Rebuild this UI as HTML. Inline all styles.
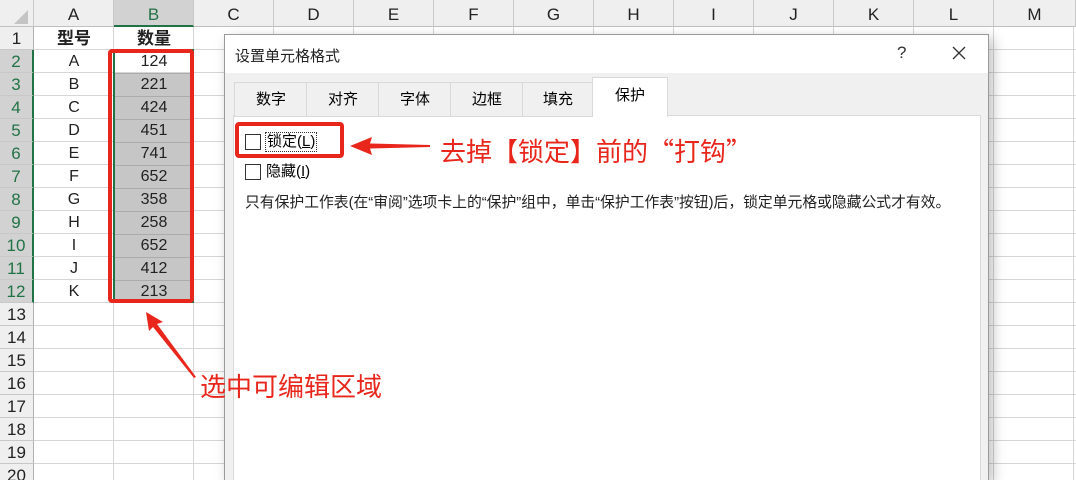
<!DOCTYPE html>
<html style="overflow:hidden;width:1076px;height:480px"><head><meta charset="utf-8"><style>
body{margin:0;width:1076px;height:480px;overflow:hidden;background:#fff;position:relative;font-family:"Liberation Sans","Noto Sans CJK SC",sans-serif;}
.a{position:absolute}
.ch{position:absolute;top:0;height:27px;line-height:30px;text-align:center;font-size:17px;color:#222;border-right:1px solid #c8c8c8;box-sizing:border-box;background:#efefef;border-bottom:1px solid #c0c0c0}
.rh{position:absolute;left:0;width:34px;height:23px;line-height:24px;text-align:center;font-size:17px;color:#222;background:#efefef;border-bottom:1px solid #c8c8c8;border-right:1px solid #b0b0b0;box-sizing:border-box;overflow:hidden}
.c{position:absolute;height:23px;line-height:24px;text-align:center;font-size:16px;color:#222;box-sizing:border-box}
</style></head><body>
<div class="a" style="left:0;top:0;width:1076px;height:480px;background-color:#fff;background-image:linear-gradient(to right,#d6d6d6 1px,transparent 1px),linear-gradient(to bottom,#d6d6d6 1px,transparent 1px);background-size:80px 23px;background-position:33px 26px"></div>
<div class="ch" style="left:0;width:34px"><div class="a" style="left:14px;top:10px;width:0;height:0;border-left:14px solid transparent;border-bottom:14px solid #c4c4c4"></div></div>
<div class="ch" style="left:34px;width:80px">A</div>
<div class="ch" style="left:114px;width:80px;background:#d2d2d2;border-bottom:2px solid #217346;color:#217346">B</div>
<div class="ch" style="left:194px;width:80px">C</div>
<div class="ch" style="left:274px;width:80px">D</div>
<div class="ch" style="left:354px;width:80px">E</div>
<div class="ch" style="left:434px;width:80px">F</div>
<div class="ch" style="left:514px;width:80px">G</div>
<div class="ch" style="left:594px;width:80px">H</div>
<div class="ch" style="left:674px;width:80px">I</div>
<div class="ch" style="left:754px;width:80px">J</div>
<div class="ch" style="left:834px;width:80px">K</div>
<div class="ch" style="left:914px;width:80px">L</div>
<div class="ch" style="left:994px;width:82px">M</div>

<div class="rh" style="top:27px">1</div>
<div class="rh" style="top:50px;background:#d2d2d2;color:#217346;border-right:2px solid #217346">2</div>
<div class="rh" style="top:73px;background:#d2d2d2;color:#217346;border-right:2px solid #217346">3</div>
<div class="rh" style="top:96px;background:#d2d2d2;color:#217346;border-right:2px solid #217346">4</div>
<div class="rh" style="top:119px;background:#d2d2d2;color:#217346;border-right:2px solid #217346">5</div>
<div class="rh" style="top:142px;background:#d2d2d2;color:#217346;border-right:2px solid #217346">6</div>
<div class="rh" style="top:165px;background:#d2d2d2;color:#217346;border-right:2px solid #217346">7</div>
<div class="rh" style="top:188px;background:#d2d2d2;color:#217346;border-right:2px solid #217346">8</div>
<div class="rh" style="top:211px;background:#d2d2d2;color:#217346;border-right:2px solid #217346">9</div>
<div class="rh" style="top:234px;background:#d2d2d2;color:#217346;border-right:2px solid #217346">10</div>
<div class="rh" style="top:257px;background:#d2d2d2;color:#217346;border-right:2px solid #217346">11</div>
<div class="rh" style="top:280px;background:#d2d2d2;color:#217346;border-right:2px solid #217346">12</div>
<div class="rh" style="top:303px">13</div>
<div class="rh" style="top:326px">14</div>
<div class="rh" style="top:349px">15</div>
<div class="rh" style="top:372px">16</div>
<div class="rh" style="top:395px">17</div>
<div class="rh" style="top:418px">18</div>
<div class="rh" style="top:441px">19</div>
<div class="rh" style="top:464px;height:16px;border-bottom:none">20</div>

<div class="a" style="left:114px;top:73px;width:80px;height:230px;background:#c6c6c6;background-image:linear-gradient(to bottom,#ababab 1px,transparent 1px);background-size:80px 23px"></div>
<div class="a" style="left:113px;top:49px;width:81px;height:254px;border:2px solid #217346;box-sizing:border-box"></div>

<div class="c" style="left:34px;top:27px;width:80px;font-weight:bold;font-size:17px">型号</div>
<div class="c" style="left:114px;top:27px;width:80px;font-weight:bold;font-size:17px">数量</div>
<div class="c" style="left:34px;top:50px;width:80px">A</div><div class="c" style="left:114px;top:50px;width:80px">124</div>
<div class="c" style="left:34px;top:73px;width:80px">B</div><div class="c" style="left:114px;top:73px;width:80px">221</div>
<div class="c" style="left:34px;top:96px;width:80px">C</div><div class="c" style="left:114px;top:96px;width:80px">424</div>
<div class="c" style="left:34px;top:119px;width:80px">D</div><div class="c" style="left:114px;top:119px;width:80px">451</div>
<div class="c" style="left:34px;top:142px;width:80px">E</div><div class="c" style="left:114px;top:142px;width:80px">741</div>
<div class="c" style="left:34px;top:165px;width:80px">F</div><div class="c" style="left:114px;top:165px;width:80px">652</div>
<div class="c" style="left:34px;top:188px;width:80px">G</div><div class="c" style="left:114px;top:188px;width:80px">358</div>
<div class="c" style="left:34px;top:211px;width:80px">H</div><div class="c" style="left:114px;top:211px;width:80px">258</div>
<div class="c" style="left:34px;top:234px;width:80px">I</div><div class="c" style="left:114px;top:234px;width:80px">652</div>
<div class="c" style="left:34px;top:257px;width:80px">J</div><div class="c" style="left:114px;top:257px;width:80px">412</div>
<div class="c" style="left:34px;top:280px;width:80px">K</div><div class="c" style="left:114px;top:280px;width:80px">213</div>

<div class="a" style="left:108px;top:49px;width:86px;height:254px;border:4px solid #e8261c;border-radius:4px;box-sizing:border-box"></div>

<div class="a" style="left:224px;top:34px;width:765px;height:446px;background:#f0f0f0;border:1px solid #9a9a9a;border-bottom:none;box-sizing:border-box;box-shadow:4px 4px 12px rgba(0,0,0,0.25);overflow:hidden">
 <div class="a" style="left:0;top:0;width:763px;height:38px;background:#fff"></div>
 <div class="a" style="left:10px;top:10px;font-size:15px;color:#222">设置单元格格式</div>
 <div class="a" style="left:672px;top:8px;font-size:17px;color:#333">?</div>
 <svg class="a" style="left:727px;top:11px" width="14" height="14"><path d="M1 1L13 13M13 1L1 13" stroke="#333" stroke-width="1.3"/></svg>
 <div class="a" style="left:8px;top:80px;width:746px;height:380px;background:#fff;border:1px solid #d9d9d9"></div>
 <div class="a" style="left:9px;top:47px;width:72px;height:33px;border:1px solid #d9d9d9;line-height:33px;text-align:center;font-size:15px;background:#f0f0f0">数字</div>
 <div class="a" style="left:81px;top:47px;width:72px;height:33px;border:1px solid #d9d9d9;line-height:33px;text-align:center;font-size:15px;background:#f0f0f0">对齐</div>
 <div class="a" style="left:153px;top:47px;width:72px;height:33px;border:1px solid #d9d9d9;line-height:33px;text-align:center;font-size:15px;background:#f0f0f0">字体</div>
 <div class="a" style="left:225px;top:47px;width:72px;height:33px;border:1px solid #d9d9d9;line-height:33px;text-align:center;font-size:15px;background:#f0f0f0">边框</div>
 <div class="a" style="left:297px;top:47px;width:70px;height:33px;border:1px solid #d9d9d9;line-height:33px;text-align:center;font-size:15px;background:#f0f0f0">填充</div>
 <div class="a" style="left:367px;top:42px;width:74px;height:39px;border:1px solid #d9d9d9;border-bottom:none;background:#fff;line-height:36px;text-align:center;font-size:15px">保护</div>
 <div class="a" style="left:20px;top:99px;width:14px;height:14px;border:1px solid #333"></div>
 <div class="a" style="left:40px;top:97px;font-size:15px;border:1px dotted #333;padding:0 1px;line-height:18px">锁定(<u>L</u>)</div>
 <div class="a" style="left:20px;top:129px;width:14px;height:14px;border:1px solid #333"></div>
 <div class="a" style="left:41px;top:128px;font-size:15px;line-height:18px">隐藏(<u>I</u>)</div>
 <div class="a" style="left:20px;top:156px;font-size:14.8px;color:#222;white-space:nowrap">只有保护工作表(在“审阅”选项卡上的“保护”组中，单击“保护工作表”按钮)后，锁定单元格或隐藏公式才有效。</div>
</div>

<div class="a" style="left:235px;top:122px;width:109px;height:36px;border:4px solid #e8261c;border-radius:4px;box-sizing:border-box"></div>
<svg class="a" style="left:0;top:0" width="1076" height="480">
 <path d="M350 146 L372 137 L370 143.5 L430 145 L430 147 L370 148.5 L372 155 Z" fill="#e8261c"/>
 <path d="M146 312 L163 322 L157 324 L196 377 L194 378 L153 327 L149 331 Z" fill="#e8261c"/>
</svg>
<div class="a" style="left:440px;top:134px;font-size:26px;color:#e8261c;white-space:nowrap;line-height:34px;font-family:'Noto Sans CJK SC',sans-serif">去掉【锁定】前的“打钩”</div>
<div class="a" style="left:200px;top:370px;font-size:26px;color:#e8261c;white-space:nowrap;line-height:34px">选中可编辑区域</div>
</body></html>
